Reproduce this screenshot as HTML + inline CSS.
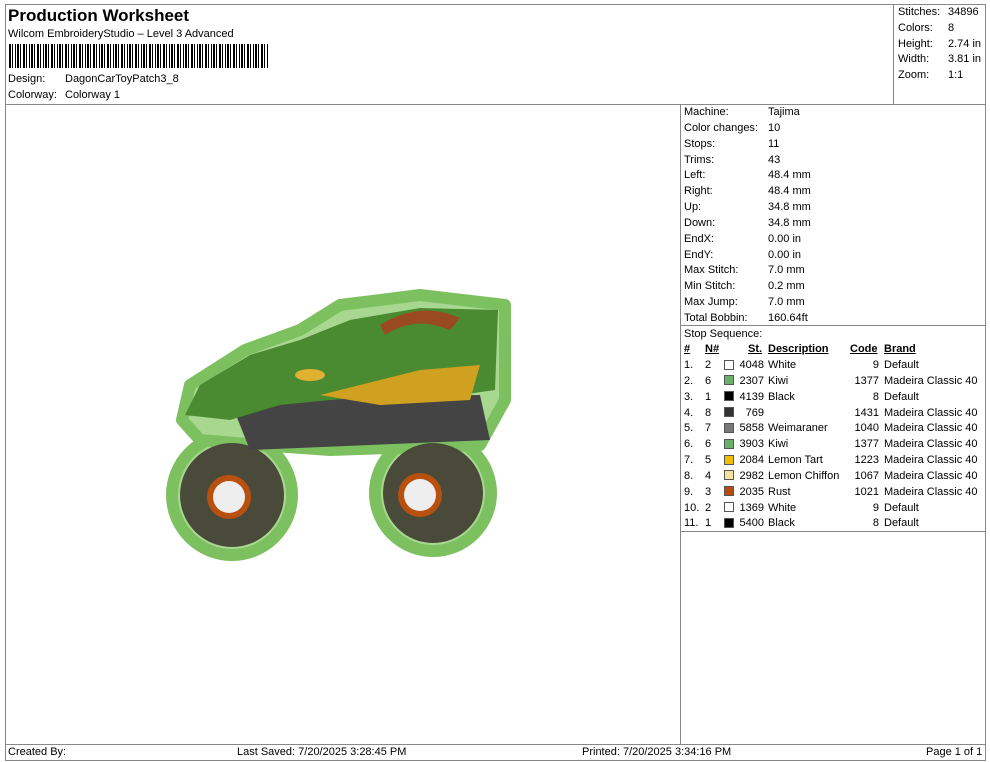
<!DOCTYPE html>
<html><head><meta charset="utf-8"><style>
*{margin:0;padding:0;box-sizing:border-box}
body{width:990px;height:762px;background:#fff;font-family:"Liberation Sans",Arial,sans-serif;font-size:11px;color:#000;position:relative;overflow:hidden}
.a{position:absolute;white-space:nowrap}
.ln{position:absolute;background:#888}
.sw{position:absolute;width:10px;height:10px;border:1px solid #555}
u{text-decoration:underline}
</style></head><body>
<!-- frame lines -->
<div class="ln" style="left:5px;top:4px;width:981px;height:1px"></div>
<div class="ln" style="left:5px;top:4px;width:1px;height:757px"></div>
<div class="ln" style="left:985px;top:4px;width:1px;height:757px"></div>
<div class="ln" style="left:5px;top:104px;width:981px;height:1px"></div>
<div class="ln" style="left:893px;top:4px;width:1px;height:100px"></div>
<div class="ln" style="left:680px;top:104px;width:1px;height:640px"></div>
<div class="ln" style="left:680px;top:325px;width:306px;height:1px"></div>
<div class="ln" style="left:680px;top:531px;width:306px;height:1px"></div>
<div class="ln" style="left:5px;top:744px;width:981px;height:1px"></div>
<div class="ln" style="left:5px;top:760px;width:981px;height:1px"></div>

<div class="a" style="left:8px;top:6px;font-size:17px;font-weight:bold">Production Worksheet</div>
<div class="a" style="left:8px;top:28px">Wilcom EmbroideryStudio – Level 3 Advanced</div>
<div class="a" style="left:9px;top:44px;width:259px;height:24px;background:repeating-linear-gradient(90deg,#000 0 2px,#fff 2px 3px,#000 3px 4px,#fff 4px 6px,#000 6px 7px,#fff 7px 8px,#000 8px 10px,#fff 10px 11px,#000 11px 12px,#fff 12px 14px)"></div>
<div class="a" style="left:8px;top:73px">Design:</div><div class="a" style="left:65px;top:73px">DagonCarToyPatch3_8</div>
<div class="a" style="left:8px;top:89px">Colorway:</div><div class="a" style="left:65px;top:89px">Colorway 1</div>

<div class="a" style="left:898px;top:5px;line-height:15.8px">Stitches:<br>Colors:<br>Height:<br>Width:<br>Zoom:</div>
<div class="a" style="left:948px;top:5px;line-height:15.8px">34896<br>8<br>2.74 in<br>3.81 in<br>1:1</div>

<div class="a" style="left:684px;top:105px;line-height:15.85px">Machine:<br>Color changes:<br>Stops:<br>Trims:<br>Left:<br>Right:<br>Up:<br>Down:<br>EndX:<br>EndY:<br>Max Stitch:<br>Min Stitch:<br>Max Jump:<br>Total Bobbin:<br>Stop Sequence:</div>
<div class="a" style="left:768px;top:105px;line-height:15.85px">Tajima<br>10<br>11<br>43<br>48.4 mm<br>48.4 mm<br>34.8 mm<br>34.8 mm<br>0.00 in<br>0.00 in<br>7.0 mm<br>0.2 mm<br>7.0 mm<br>160.64ft</div>

<div class="a" style="left:684px;top:343px;font-weight:bold"><u>#</u></div>
<div class="a" style="left:705px;top:343px;font-weight:bold"><u>N#</u></div>
<div class="a" style="left:748px;top:343px;font-weight:bold"><u>St.</u></div>
<div class="a" style="left:768px;top:343px;font-weight:bold"><u>Description</u></div>
<div class="a" style="left:850px;top:343px;font-weight:bold"><u>Code</u></div>
<div class="a" style="left:884px;top:343px;font-weight:bold"><u>Brand</u></div>

<div class="a" style="left:684px;top:358px;line-height:15.85px">1.<br>2.<br>3.<br>4.<br>5.<br>6.<br>7.<br>8.<br>9.<br>10.<br>11.</div>
<div class="a" style="left:705px;top:358px;line-height:15.85px">2<br>6<br>1<br>8<br>7<br>6<br>5<br>4<br>3<br>2<br>1</div>
<div class="a" style="left:736px;top:358px;line-height:15.85px;text-align:right;width:28px">4048<br>2307<br>4139<br>769<br>5858<br>3903<br>2084<br>2982<br>2035<br>1369<br>5400</div>
<div class="a" style="left:768px;top:358px;line-height:15.85px">White<br>Kiwi<br>Black<br><br>Weimaraner<br>Kiwi<br>Lemon Tart<br>Lemon Chiffon<br>Rust<br>White<br>Black</div>
<div class="a" style="left:840px;top:358px;line-height:15.85px;text-align:right;width:39px">9<br>1377<br>8<br>1431<br>1040<br>1377<br>1223<br>1067<br>1021<br>9<br>8</div>
<div class="a" style="left:884px;top:358px;line-height:15.85px">Default<br>Madeira Classic 40<br>Default<br>Madeira Classic 40<br>Madeira Classic 40<br>Madeira Classic 40<br>Madeira Classic 40<br>Madeira Classic 40<br>Madeira Classic 40<br>Default<br>Default</div>
<div class="sw" style="left:724px;top:360px;background:#fff"></div>
<div class="sw" style="left:724px;top:375px;background:#6ab06a"></div>
<div class="sw" style="left:724px;top:391px;background:#000"></div>
<div class="sw" style="left:724px;top:407px;background:#333"></div>
<div class="sw" style="left:724px;top:423px;background:#777"></div>
<div class="sw" style="left:724px;top:439px;background:#6ab06a"></div>
<div class="sw" style="left:724px;top:455px;background:#f0c000"></div>
<div class="sw" style="left:724px;top:470px;background:#f5e0a0"></div>
<div class="sw" style="left:724px;top:486px;background:#b84a10"></div>
<div class="sw" style="left:724px;top:502px;background:#fff"></div>
<div class="sw" style="left:724px;top:518px;background:#000"></div>

<svg class="a" style="left:0;top:0" width="680" height="744">
<g stroke="#7cc060" stroke-width="12" stroke-linejoin="round" fill="#a8d890">
<circle cx="232" cy="495" r="60"/><circle cx="433" cy="493" r="58"/>
<path d="M182 420 L190 385 L245 350 L300 330 L340 305 L420 295 L505 305 L505 400 L480 445 L330 450 L260 445 L200 440 Z"/>
</g>
<circle cx="232" cy="495" r="52" fill="#4a4a3a"/><circle cx="433" cy="493" r="50" fill="#4a4a3a"/>
<path d="M230 400 L480 395 L490 440 L250 450 Z" fill="#444"/>
<path d="M185 415 L200 385 L250 355 L300 340 L350 320 L420 308 L498 310 L495 390 L460 395 L400 395 L330 400 L280 405 L230 420 Z" fill="#4a8a30"/>
<path d="M320 395 L420 370 L480 365 L470 400 L380 405 Z" fill="#d0a020"/>
<path d="M380 325 Q420 300 460 318 L450 330 Q415 315 385 335 Z" fill="#9a4a20"/>
<ellipse cx="310" cy="375" rx="15" ry="6" fill="#e0b030"/>
<circle cx="229" cy="497" r="22" fill="#b85010"/><circle cx="229" cy="497" r="16" fill="#eee"/>
<circle cx="420" cy="495" r="22" fill="#b85010"/><circle cx="420" cy="495" r="16" fill="#eee"/>
</svg>

<div class="a" style="left:8px;top:746px">Created By:</div>
<div class="a" style="left:237px;top:746px">Last Saved: 7/20/2025 3:28:45 PM</div>
<div class="a" style="left:582px;top:746px">Printed: 7/20/2025 3:34:16 PM</div>
<div class="a" style="left:926px;top:746px">Page 1 of 1</div>
</body></html>
